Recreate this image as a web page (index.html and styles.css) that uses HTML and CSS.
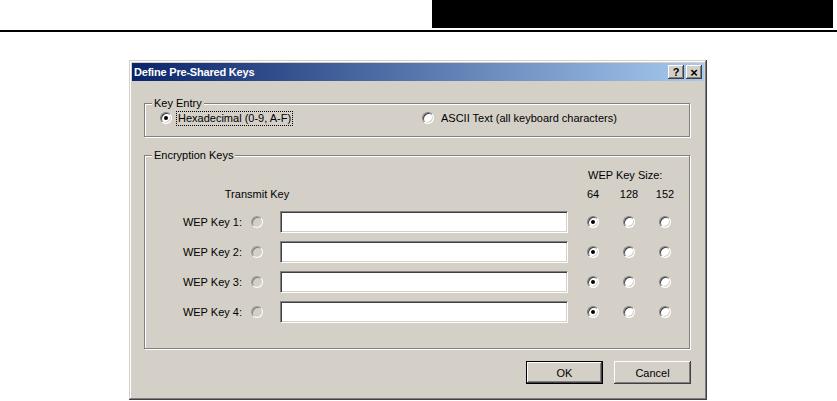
FILE: index.html
```html
<!DOCTYPE html>
<html>
<head>
<meta charset="utf-8">
<link rel="stylesheet" href="styles.css">
</head>
<body>
<div class="header"><div class="header-block"></div></div>
<div class="rule"></div>
<div class="dialog">
  <div class="titlebar">
    <span class="title">Define Pre-Shared Keys</span>
    <div class="tb-buttons"><span class="tb-btn">?</span><span class="tb-btn tb-close">×</span></div>
  </div>
  <div class="body">
    <div class="group group-entry">
      <span class="legend">Key Entry</span>
      <div class="opt opt-hex"><span class="radio checked"></span><span class="focus">Hexadecimal (0-9, A-F)</span></div>
      <div class="opt opt-ascii"><span class="radio"></span><span>ASCII Text (all keyboard characters)</span></div>
    </div>
    <div class="group group-keys">
      <span class="legend">Encryption Keys</span>
      <div class="keys-head">
        <div class="size-title">WEP Key Size:</div>
        <div class="tx-title"><span>Transmit Key</span></div>
        <div class="size-num c4">64</div>
        <div class="size-num c5">128</div>
        <div class="size-num c6">152</div>
      </div>
      <div class="keys-rows">
        <div class="cell label">WEP Key 1:</div>
        <div class="cell center"><span class="radio disabled"></span></div>
        <div class="cell"><span class="field"></span></div>
        <div class="cell center"><span class="radio checked"></span></div>
        <div class="cell center"><span class="radio"></span></div>
        <div class="cell center"><span class="radio"></span></div>

        <div class="cell label">WEP Key 2:</div>
        <div class="cell center"><span class="radio disabled"></span></div>
        <div class="cell"><span class="field"></span></div>
        <div class="cell center"><span class="radio checked"></span></div>
        <div class="cell center"><span class="radio"></span></div>
        <div class="cell center"><span class="radio"></span></div>

        <div class="cell label">WEP Key 3:</div>
        <div class="cell center"><span class="radio disabled"></span></div>
        <div class="cell"><span class="field"></span></div>
        <div class="cell center"><span class="radio checked"></span></div>
        <div class="cell center"><span class="radio"></span></div>
        <div class="cell center"><span class="radio"></span></div>

        <div class="cell label">WEP Key 4:</div>
        <div class="cell center"><span class="radio disabled"></span></div>
        <div class="cell"><span class="field"></span></div>
        <div class="cell center"><span class="radio checked"></span></div>
        <div class="cell center"><span class="radio"></span></div>
        <div class="cell center"><span class="radio"></span></div>
      </div>
    </div>
    <div class="actions">
      <div class="btn btn-default"><span>OK</span></div>
      <div class="btn"><span>Cancel</span></div>
    </div>
  </div>
</div>
</body>
</html>
```

FILE: styles.css
```css
body {
  margin: 0;
  background: #fff;
  font-family: "Liberation Sans", Arial, sans-serif;
  font-size: 11px;
  color: #000;
}
.header {
  height: 28px;
  display: flex;
}
.header-block {
  margin-left: 432px;
  width: 401px;
  background: #000;
}
.rule {
  height: 2px;
  margin-top: 2px;
  background: #000;
}
.dialog {
  margin: 28px 0 0 129px;
  width: 578px;
  height: 340px;
  box-sizing: border-box;
  padding: 3px;
  background: #d4d0c8;
  box-shadow: inset -1px -1px #404040, inset 1px 1px #d4d0c8, inset -2px -2px #808080, inset 2px 2px #fff;
  display: flex;
  flex-direction: column;
}
.titlebar {
  height: 18px;
  flex: none;
  background: linear-gradient(to right, #0a246a, #a6caf0);
  display: flex;
  align-items: center;
  justify-content: space-between;
  padding: 0 2px;
}
.title {
  color: #fff;
  font-weight: bold;
  font-size: 11px;
  letter-spacing: -0.2px;
}
.tb-buttons {
  display: flex;
  gap: 2px;
}
.tb-btn {
  width: 16px;
  height: 14px;
  box-sizing: border-box;
  background: #d4d0c8;
  box-shadow: inset -1px -1px #404040, inset 1px 1px #fff, inset -2px -2px #808080;
  display: flex;
  align-items: center;
  justify-content: center;
  font-weight: bold;
  font-size: 11px;
  line-height: 1;
}
.tb-close {
  font-size: 13px;
}
.body {
  padding: 22px 13px 0 12px;
  display: flex;
  flex-direction: column;
}
.group {
  position: relative;
  border: 1px solid #808080;
  box-shadow: inset 1px 1px #fff, 1px 1px #fff;
  box-sizing: border-box;
  margin-right: 1px;
}
.legend {
  position: absolute;
  top: -7px;
  left: 7px;
  padding: 0 2px;
  line-height: 13px;
  background: #d4d0c8;
}
.group-entry {
  height: 34px;
  padding: 4px 0 8px 15px;
  display: flex;
  align-items: center;
}
.opt {
  display: flex;
  align-items: center;
  gap: 5px;
}
.opt-hex {
  flex: 0 0 262px;
}
.opt-ascii {
  gap: 7px;
}
.focus {
  outline: 1px dotted #000;
  outline-offset: 0;
  padding: 0 1px;
  line-height: 13px;
}
.radio {
  position: relative;
  display: inline-block;
  width: 12px;
  height: 12px;
  box-sizing: border-box;
  border-radius: 50%;
  border: 1px solid;
  border-color: #808080 #fff #fff #808080;
  background: #fff;
  box-shadow: inset 1px 1px #404040, inset -1px -1px #d4d0c8;
  flex: none;
}
.radio.disabled {
  background: #d4d0c8;
  border-color: #a0a0a0 #fff #fff #a0a0a0;
  box-shadow: inset 1px 1px #808080;
}
.radio.checked::after {
  content: "";
  position: absolute;
  left: 3px;
  top: 3px;
  width: 4px;
  height: 4px;
  border-radius: 50%;
  background: #000;
}
.group-keys {
  margin-top: 18px;
  height: 194px;
  padding-top: 10px;
}
.keys-head,
.keys-rows {
  display: grid;
  grid-template-columns: 97px 30px 303px 36px 36px 36px;
}
.keys-head {
  grid-template-rows: 18px 19px;
}
.keys-rows {
  grid-template-rows: repeat(4, 30px);
}
.size-title {
  grid-column: 4 / 7;
  grid-row: 1;
  align-self: center;
  padding-left: 13px;
}
.tx-title {
  grid-column: 2;
  grid-row: 2;
  display: flex;
  justify-content: center;
  align-items: center;
  white-space: nowrap;
}
.size-num {
  grid-row: 2;
  text-align: center;
  align-self: center;
}
.c4 { grid-column: 4; }
.c5 { grid-column: 5; }
.c6 { grid-column: 6; }
.cell {
  height: 22px;
  align-self: end;
  display: flex;
  align-items: center;
  white-space: nowrap;
}
.cell.label {
  justify-self: end;
}
.cell.center {
  justify-content: center;
}
.field {
  display: block;
  margin-left: 8px;
  width: 288px;
  height: 22px;
  box-sizing: border-box;
  background: #fff;
  border: 1px solid;
  border-color: #808080 #fff #fff #808080;
  box-shadow: inset 1px 1px #404040, inset -1px -1px #d4d0c8;
}
.actions {
  margin-top: 12px;
  display: flex;
  justify-content: flex-end;
  gap: 11px;
}
.btn {
  width: 77px;
  height: 23px;
  box-sizing: border-box;
  background: #d4d0c8;
  box-shadow: inset -1px -1px #404040, inset 1px 1px #fff, inset -2px -2px #808080, inset 2px 2px #d4d0c8;
  display: flex;
  align-items: center;
  justify-content: center;
}
.btn-default {
  border: 1px solid #000;
}
```
